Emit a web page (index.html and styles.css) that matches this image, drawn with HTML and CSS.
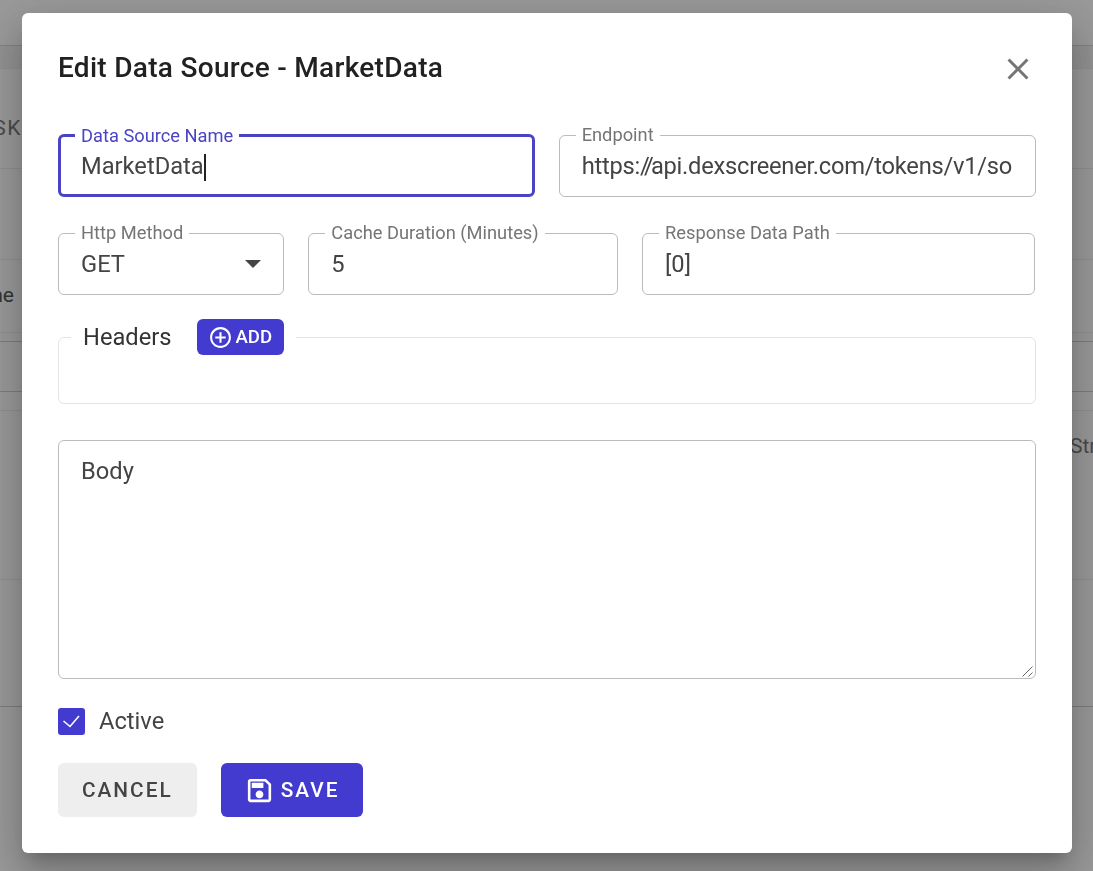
FILE: index.html
```html
<!DOCTYPE html>
<html lang="en">

<head>
    <meta charset="UTF-8">
    <meta name="viewport" content="width=device-width, initial-scale=1.0">
    <title>Edit Data Source</title>
    <link rel="stylesheet" href="styles.css">
</head>

<body>
    <!-- page behind the dialog -->
    <div class="page">
        <div class="page-bar"></div>
        <div class="page-row page-row-head"></div>
        <div class="page-row page-row-task">
            <div class="page-cell-left page-cell-task page-text-muted">TASK</div>
        </div>
        <div class="page-row page-row-b"></div>
        <div class="page-row page-row-name">
            <div class="page-cell-left page-cell-name">Name</div>
        </div>
        <div class="page-row page-row-d page-row-dark"></div>
        <div class="page-row page-row-e page-row-dark"></div>
        <div class="page-row page-row-f"></div>
        <div class="page-row page-row-strategy">
            <div class="page-cell-right page-text-muted">Strategy</div>
        </div>
        <div class="page-row page-row-h page-row-dark"></div>
    </div>

    <div class="backdrop"></div>

    <div class="dialog">
        <div class="dialog-head">
            <h2 class="dialog-title">Edit Data Source - MarketData</h2>
            <svg class="dialog-close" viewBox="0 0 24 24">
                <path d="M19 6.41 17.59 5 12 10.59 6.41 5 5 6.41 10.59 12 5 17.59 6.41 19 12 13.41 17.59 19 19 17.59 13.41 12z"></path>
            </svg>
        </div>

        <form class="form">
            <div class="form-grid">
                <fieldset class="field field-focus span-6">
                    <legend class="field-label">Data Source Name</legend>
                    <div class="field-value">MarketData<span class="caret"></span></div>
                </fieldset>
                <fieldset class="field field-end span-6">
                    <legend class="field-label">Endpoint</legend>
                    <div class="field-value">https:<span class="url-slashes">//</span>api.dexscreener.com/tokens/v1/solana/So11111111111111111111111111111111111111112</div>
                </fieldset>
                <fieldset class="field span-3">
                    <legend class="field-label">Http Method</legend>
                    <div class="field-value field-select">
                        GET
                        <svg class="select-arrow" viewBox="7 10 10 5">
                            <path d="M7 10l5 5 5-5z"></path>
                        </svg>
                    </div>
                </fieldset>
                <fieldset class="field span-4">
                    <legend class="field-label">Cache Duration (Minutes)</legend>
                    <div class="field-value">5</div>
                </fieldset>
                <fieldset class="field span-5">
                    <legend class="field-label">Response Data Path</legend>
                    <div class="field-value">[0]</div>
                </fieldset>
            </div>

            <fieldset class="headers">
                <legend class="headers-legend">
                    <span class="headers-title">Headers</span>
                    <button class="btn-add" type="button">
                        <svg class="btn-add-icon" viewBox="0 0 24 24">
                            <path d="M13 7h-2v4H7v2h4v4h2v-4h4v-2h-4V7zm-1-5C6.48 2 2 6.48 2 12s4.48 10 10 10 10-4.48 10-10S17.52 2 12 2zm0 18c-4.41 0-8-3.59-8-8s3.59-8 8-8 8 3.59 8 8-3.59 8-8 8z"></path>
                        </svg>
                        ADD
                    </button>
                </legend>
            </fieldset>

            <div class="body-wrap">
                <textarea class="body-input">Body</textarea>
                <svg class="body-grip" viewBox="0 0 12 12">
                    <path d="M0.5 11.5L10.5 1.5M6.5 11.5L10.5 7.5"></path>
                </svg>
            </div>

            <div class="check-row">
                <span class="check-box">
                    <svg class="check-icon" viewBox="0 0 27 27">
                        <path d="M5.5 13l6.5 5.5L21 8"></path>
                    </svg>
                </span>
                <span class="check-label">Active</span>
            </div>

            <div class="actions">
                <button class="btn btn-cancel" type="button">CANCEL</button>
                <button class="btn btn-save" type="button">
                    <svg class="btn-save-icon" viewBox="0 0 24 24">
                        <path d="M17 3H5c-1.11 0-2 .9-2 2v14c0 1.1.89 2 2 2h14c1.1 0 2-.9 2-2V7l-4-4zm2 16H5V5h11.17L19 7.83V19zm-7-7c-1.66 0-3 1.34-3 3s1.34 3 3 3 3-1.34 3-3-1.34-3-3-3zM6 6h9v4H6z"></path>
                    </svg>
                    SAVE
                </button>
            </div>
        </form>
    </div>
</body>

</html>
```

FILE: styles.css
```css
* {
    margin: 0;
    padding: 0;
    box-sizing: border-box;
}

html,
body {
    height: 100%;
    overflow: hidden;
}

body {
    font-family: Roboto, "Liberation Sans", sans-serif;
    font-size: 23.7px;
    color: #444;
    background: #fff;
}

/* page behind the dialog */
.page-bar {
    height: 46px;
    background: #fff;
    border-bottom: 1px solid #d8d8d8;
}

.page-row {
    display: flex;
    justify-content: space-between;
    border-bottom: 1px solid #eee;
    font-size: 21px;
    color: #555;
}

.page-row-dark {
    border-bottom-color: #d0d0d0;
}

.page-row-head {
    height: 23px;
    background: #f3f3f3;
}

.page-row-task {
    height: 100px;
    padding-top: 47px;
}

.page-row-b {
    height: 91px;
}

.page-row-name {
    height: 73px;
    padding-top: 23px;
}

.page-row-d {
    height: 9px;
}

.page-row-e {
    height: 50px;
}

.page-row-f {
    height: 19px;
}

.page-row-strategy {
    height: 169px;
    justify-content: flex-end;
    padding-top: 23px;
}

.page-row-h {
    height: 127px;
}

.page-cell-left {
    display: flex;
    justify-content: flex-end;
    overflow: hidden;
    white-space: nowrap;
}

.page-cell-task {
    width: 22px;
    letter-spacing: 1.5px;
}

.page-cell-name {
    width: 14px;
}

.page-cell-right {
    width: 23px;
    overflow: hidden;
    white-space: nowrap;
}

.page-text-muted {
    color: #7c7c7c;
}

.backdrop {
    position: fixed;
    top: 0;
    right: 0;
    bottom: 0;
    left: 0;
    background: rgba(0, 0, 0, 0.4);
}

/* dialog */
.dialog {
    position: fixed;
    top: 13px;
    left: 22px;
    width: 1050px;
    height: 840px;
    padding: 32px 36px 36px;
    background: #fff;
    border-radius: 6px;
    box-shadow: 0 11px 15px -7px rgba(0, 0, 0, 0.2), 0 24px 38px 3px rgba(0, 0, 0, 0.14), 0 9px 46px 8px rgba(0, 0, 0, 0.12);
}

.dialog-head {
    display: flex;
    justify-content: space-between;
    align-items: center;
    height: 44px;
    margin-bottom: 34px;
}

.dialog-title {
    font-size: 28px;
    font-weight: 500;
    letter-spacing: 0.3px;
    color: #212121;
}

.dialog-close {
    width: 36px;
    height: 36px;
    margin-top: 4px;
    fill: #757575;
}

.form {
    display: flex;
    flex-direction: column;
    gap: 24px;
}

.form-grid {
    display: grid;
    grid-template-columns: repeat(12, 59.45px);
    gap: 24px;
}

.span-3 {
    grid-column: span 3;
}

.span-4 {
    grid-column: span 4;
}

.span-5 {
    grid-column: span 5;
}

.span-6 {
    grid-column: span 6;
}

.field {
    min-width: 0;
    padding: 0 22px 11px;
    border: 1px solid #bbb;
    border-radius: 6px;
}

.field-end {
    margin-right: -0.6px;
}

.field-end .field-value {
    letter-spacing: -0.25px;
}

.url-slashes {
    letter-spacing: -3px;
}

.field-label {
    margin-left: -6px;
    padding: 0 6px;
    font-size: 18.3px;
    line-height: 24px;
    color: #757575;
}

.field-value {
    height: 38px;
    line-height: 38px;
    white-space: nowrap;
    overflow: hidden;
}

.field-focus {
    border: 3px solid #4a44c4;
    padding: 0 20px 8px;
}

.field-focus .field-label {
    line-height: 25px;
    color: #4a44c4;
}

.field-focus .field-value {
    height: 35px;
    line-height: 36px;
}

.caret {
    display: inline-block;
    width: 2px;
    height: 27px;
    vertical-align: middle;
    background: #222;
}

.field-select {
    display: flex;
    justify-content: space-between;
    align-items: center;
}

.select-arrow {
    width: 16px;
    height: 8px;
    fill: #444;
}

.headers {
    height: 85px;
    padding: 0 12px;
    border: 1px solid #e4e4e4;
    border-radius: 6px;
}

.headers-legend {
    display: flex;
    align-items: center;
    gap: 25px;
    margin-left: 0;
    padding: 0 12px;
    color: #333;
}

.btn-add {
    display: flex;
    align-items: center;
    gap: 3px;
    height: 36px;
    padding: 0 12px 0 11px;
    border: none;
    border-radius: 6px;
    background: #433bcf;
    color: #fff;
    font-family: inherit;
    font-size: 18.6px;
    font-weight: 500;
}

.btn-add-icon {
    width: 25px;
    height: 25px;
    fill: #fff;
}

.body-wrap {
    position: relative;
    margin-top: 12px;
}

.body-input {
    display: block;
    width: 100%;
    height: 239px;
    padding: 15px 22px;
    border: 1px solid #bbb;
    border-radius: 6px;
    outline: none;
    resize: none;
    font-family: inherit;
    font-size: 23.7px;
    line-height: 30px;
    color: #444;
}

.body-grip {
    position: absolute;
    right: 2px;
    bottom: 2px;
    width: 12px;
    height: 12px;
    fill: none;
    stroke: #666;
    stroke-width: 1;
}

.check-row {
    display: flex;
    align-items: center;
    gap: 14px;
    height: 36px;
}

.check-box {
    display: flex;
    width: 27px;
    height: 27px;
    border-radius: 3px;
    background: #433bcf;
}

.check-icon {
    width: 27px;
    height: 27px;
    fill: none;
    stroke: #fff;
    stroke-width: 1.6;
}

.actions {
    display: flex;
    gap: 24px;
}

.btn {
    display: flex;
    align-items: center;
    height: 54px;
    padding: 0 24px;
    border: none;
    border-radius: 6px;
    font-family: inherit;
    font-size: 20.8px;
    font-weight: 500;
    letter-spacing: 2px;
}

.btn-cancel {
    background: #eee;
    color: #444;
}

.btn-save {
    gap: 6px;
    padding: 0 24px 0 23px;
    background: #433bcf;
    color: #fff;
}

.btn-save-icon {
    width: 31px;
    height: 31px;
    fill: #fff;
}
```
